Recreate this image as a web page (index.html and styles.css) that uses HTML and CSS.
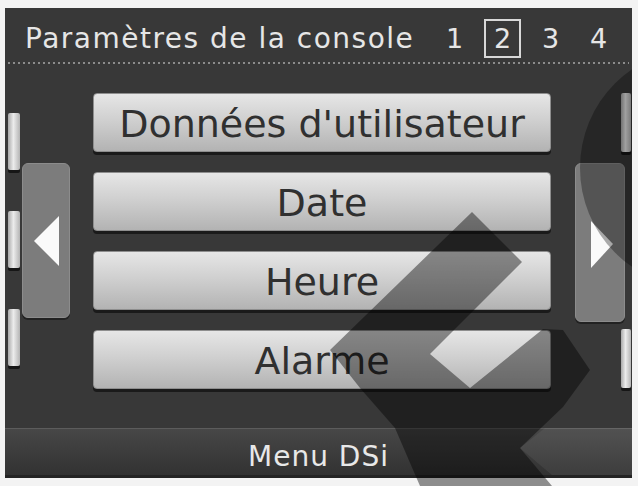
FILE: index.html
```html
<!DOCTYPE html>
<html lang="fr">
<head>
  <meta charset="UTF-8" />
  <meta name="viewport" content="width=device-width, initial-scale=1.0"/>
  <title>Paramètres de la console</title>
  <link rel="stylesheet" href="styles.css">
</head>
<body>
  <div class="screen">
    <div class="topbar">
      <span class="title">Paramètres de la console</span>
      <div class="pages">
        <span>1</span>
        <span class="current">2</span>
        <span>3</span>
        <span>4</span>
      </div>
    </div>
    <div class="dots"></div>

    <div class="main">
      <div class="side left">
        <div class="tabs">
          <div class="tab"></div>
          <div class="tab"></div>
          <div class="tab"></div>
        </div>
        <div class="arrow">
          <svg width="48" height="155" viewBox="0 0 48 155">
            <polygon points="11,77 36,52 36,102" fill="#fafafa"/>
          </svg>
        </div>
      </div>

      <div class="menu">
        <div class="item">Données d'utilisateur</div>
        <div class="item">Date</div>
        <div class="item">Heure</div>
        <div class="item">Alarme</div>
      </div>

      <div class="side right">
        <div class="tab"></div>
        <div class="arrow">
          <svg width="50" height="159" viewBox="0 0 50 159">
            <polygon points="15,57 37,80 15,104" fill="#fafafa"/>
          </svg>
        </div>
        <div class="tab"></div>
      </div>
    </div>

    <div class="bottombar">Menu DSi</div>
  </div>

  <!-- watermark drawn over the whole screen -->
  <svg class="logo" width="638" height="486" viewBox="0 0 638 486">
    <defs>
      <clipPath id="screenClip">
        <rect x="5" y="8" width="627" height="470"/>
      </clipPath>
    </defs>
    <circle cx="700" cy="168" r="120" fill="rgba(0,0,0,0.32)" clip-path="url(#screenClip)"/>
    <polygon points="520,448 545,428 632,428 632,475 552,475" fill="rgba(255,255,255,0.06)"/>
    <polygon points="472,212 522,262 430,354 470,388 543,329 563,330 590,370 563,407 520,448 552,486 420,486 395,428 360,388 330,350" fill="rgba(0,0,0,0.42)"/>
  </svg>
</body>
</html>
```

FILE: styles.css
```css
body {
  margin: 0;
  background: #f3f3f3;
  font-family: "DejaVu Sans", "Liberation Sans", sans-serif;
  position: relative;
  width: 638px;
  height: 486px;
  overflow: hidden;
}

.screen {
  margin: 8px 0 0 5px;
  width: 627px;
  height: 470px;
  background: #383838;
  display: flex;
  flex-direction: column;
}

.topbar {
  height: 54px;
  box-sizing: border-box;
  padding: 7px 15px 0 20px;
  display: flex;
  align-items: center;
  color: #e6e6e6;
}

.title {
  font-size: 28px;
  letter-spacing: 1.5px;
}

.pages {
  margin-left: auto;
  display: flex;
  gap: 11px;
}

.pages span {
  width: 37px;
  height: 39px;
  box-sizing: border-box;
  display: flex;
  align-items: center;
  justify-content: center;
  font-size: 27px;
}

.pages .current {
  border: 2px solid #d8d8d8;
}

.dots {
  height: 2px;
  margin: 0 3px;
  background: repeating-linear-gradient(90deg, #8c8c8c 0 2px, transparent 2px 5px);
}

.main {
  flex: 1;
  display: flex;
}

.side.left {
  display: flex;
  padding-left: 3px;
}

.tabs {
  width: 12px;
  display: flex;
  flex-direction: column;
  gap: 41px;
  padding-top: 49px;
}

.tab {
  height: 57px;
  border-radius: 2px;
  background: linear-gradient(90deg, #a9a9a9, #ececec 45%, #b4b4b4);
  box-shadow: 0 3px 0 #161616;
}

.arrow {
  border-radius: 6px;
  background: #7c7c7c;
  border: 1px solid #8c8c8c;
  box-sizing: border-box;
  box-shadow: 0 2px 0 #222;
}

.arrow svg {
  display: block;
}

.side.left .arrow {
  width: 48px;
  height: 155px;
  margin: 99px 0 0 2px;
}

.menu {
  width: 458px;
  margin-left: 23px;
  padding-top: 29px;
  display: flex;
  flex-direction: column;
  gap: 20px;
}

.item {
  height: 59px;
  box-sizing: border-box;
  padding-top: 3px;
  border: 1px solid #8e8e8e;
  border-radius: 4px;
  background: linear-gradient(#e6e6e6, #d0d0d0 45%, #b3b3b3);
  box-shadow: 0 3px 0 #1a1a1a;
  display: flex;
  align-items: center;
  justify-content: center;
  font-size: 38px;
  color: #303030;
}

.side.right {
  width: 57px;
  margin-left: 24px;
  padding-top: 29px;
  display: flex;
  flex-direction: column;
}

.side.right .tab {
  align-self: flex-end;
  width: 10px;
  height: 59px;
  margin-right: 1px;
}

.side.right .arrow {
  width: 50px;
  height: 159px;
  margin-top: 11px;
  margin-bottom: 7px;
}

.bottombar {
  height: 50px;
  box-sizing: border-box;
  padding-top: 9px;
  border-top: 1px solid #5c5c5c;
  border-bottom: 3px solid #242424;
  background: linear-gradient(#474747, #323232);
  display: flex;
  align-items: center;
  justify-content: center;
  color: #e8e8e8;
  font-size: 28px;
  letter-spacing: 1px;
}

.logo {
  position: absolute;
  left: 0;
  top: 0;
  pointer-events: none;
}
```
